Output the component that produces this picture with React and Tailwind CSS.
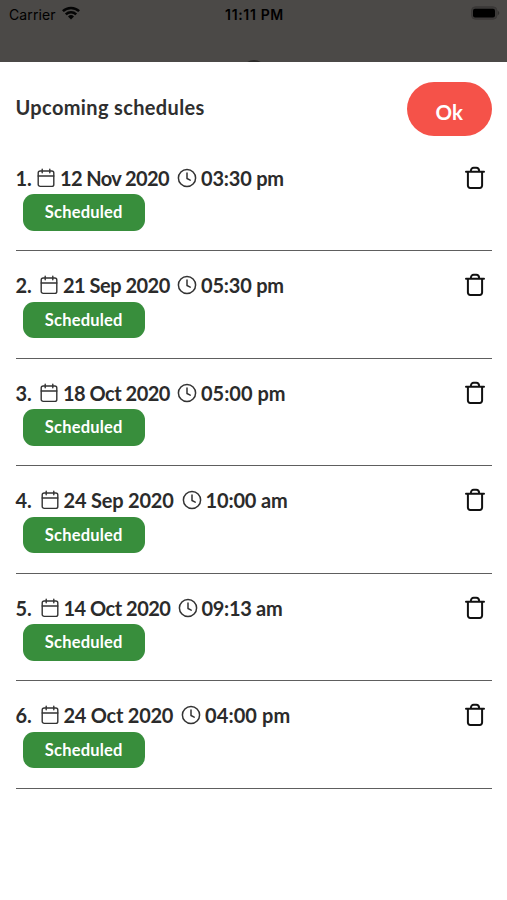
const schedules = [
  { id: 1, date: "12 Nov 2020", time: "03:30 pm", numberSize: "w-[21.5px]", dateSize: "w-[117px] tracking-[-0.6px]", timeSpacing: "tracking-[-0.2px]" },
  { id: 2, date: "21 Sep 2020", time: "05:30 pm", numberSize: "w-[24.5px]", dateSize: "w-[114px] tracking-[-0.5px]", timeSpacing: "tracking-[-0.2px]" },
  { id: 3, date: "18 Oct 2020", time: "05:00 pm", numberSize: "w-[24.5px]", dateSize: "w-[114px] tracking-[-0.5px]", timeSpacing: "tracking-[0px]" },
  { id: 4, date: "24 Sep 2020", time: "10:00 am", numberSize: "w-[25px]", dateSize: "w-[118px] tracking-[-0.2px]", timeSpacing: "tracking-[-0.15px]" },
  { id: 5, date: "14 Oct 2020", time: "09:13 am", numberSize: "w-[25px]", dateSize: "w-[114px] tracking-[-0.5px]", timeSpacing: "tracking-[-0.3px]" },
  { id: 6, date: "24 Oct 2020", time: "04:00 pm", numberSize: "w-[25px]", dateSize: "w-[117.5px] tracking-[-0.25px]", timeSpacing: "tracking-[0.1px]" },
];

function CalendarIcon() {
  return (
    <svg className="h-5 w-[18px] shrink-0" viewBox="0 0 18 20" fill="none" stroke="#333" strokeWidth="1.4" strokeLinecap="round">
      <rect x="1.2" y="3" width="15.6" height="15.4" rx="2" />
      <path d="M1.2 8h15.6M5.2 1.3v3.4M12.8 1.3v3.4" />
    </svg>
  );
}

function ClockIcon() {
  return (
    <svg className="h-5 w-5 shrink-0" viewBox="0 0 20 20" fill="none" stroke="#333" strokeWidth="1.5" strokeLinecap="round" strokeLinejoin="round">
      <circle cx="10" cy="10" r="8.6" />
      <path d="M10 5v5.5l3.2 1.6" />
    </svg>
  );
}

function TrashIcon() {
  return (
    <svg className="h-6 w-[22px]" viewBox="0 0 22 24" fill="none" stroke="#111" strokeWidth="2" strokeLinecap="round" strokeLinejoin="round">
      <path d="M2 5.8h18M3.9 5.8v13.8a2.3 2.3 0 0 0 2.3 2.3h9.6a2.3 2.3 0 0 0 2.3-2.3V5.8M6.8 5.8c0-2.8 1-4 3-4h2.4c2 0 3 1.2 3 4" />
    </svg>
  );
}

function StatusBar() {
  return (
    <header className="relative h-[62px] overflow-hidden bg-[#4b4947] font-['Inter',sans-serif] text-black">
      <div className="grid h-7 grid-cols-3 items-center pr-[7px] pl-[9px] text-[14px]">
        <div className="flex items-center gap-[6px]">
          <span className="tracking-[0.1px]">Carrier</span>
          <svg className="mb-[2px] h-[14px] w-[18px]" viewBox="0 0 18 14" fill="none" stroke="#050505" strokeWidth="2.5">
            <path d="M.9 5.2a11.6 11.6 0 0 1 16.2 0M3.8 8.4a7.5 7.5 0 0 1 10.4 0" />
            <path d="M9 13.5l-3-3a4.3 4.3 0 0 1 6 0z" fill="#050505" stroke="none" />
          </svg>
        </div>
        <span className="text-center text-[14px] font-semibold tracking-[0.65px] whitespace-nowrap">11:11 PM</span>
        <svg className="mb-[2px] h-[14px] w-[29px] justify-self-end" viewBox="0 0 29 14">
          <rect x=".5" y=".8" width="25.5" height="12.4" rx="4" fill="#3d3b3a" stroke="#3a3837" />
          <rect x="2" y="2.7" width="22" height="8.8" rx="2" fill="#000" />
          <path d="M26.8 4.8c2 .8 2 3.6 0 4.4z" fill="#302f2e" />
        </svg>
      </div>
      {/* Top edge of the control hidden behind the sheet */}
      <div className="absolute top-[60px] left-[242px] h-6 w-6 rounded-full bg-[#2b2a29]" />
    </header>
  );
}

function ScheduleRow({ schedule }) {
  return (
    <li className="flex h-[107.5px] items-start justify-between border-b border-[#5e5e5e] pt-[22px]">
      <div>
        <div className="flex h-6 items-center text-[20px] font-bold whitespace-nowrap text-[#2b2b2b]">
          <span className={schedule.numberSize}>{schedule.id}.</span>
          <CalendarIcon />
          <span className={`ml-[5px] ${schedule.dateSize}`}>{schedule.date}</span>
          <ClockIcon />
          <span className={`ml-[4px] ${schedule.timeSpacing}`}>{schedule.time}</span>
        </div>
        <div className="mt-[4.5px] ml-[7px] flex h-[36.5px] w-[122.5px] items-center justify-center rounded-[11px] bg-[#388e3c] pt-px text-[16.5px] font-bold tracking-[0.2px] text-white">
          Scheduled
        </div>
      </div>
      <button className="mr-[6px]" aria-label="Delete schedule">
        <TrashIcon />
      </button>
    </li>
  );
}

export default function App() {
  return (
    <div className="flex h-[900px] w-[507px] flex-col overflow-hidden bg-white font-['Lato',sans-serif]">
      <StatusBar />
      <main className="pt-[20px] pr-[15px] pl-[15.5px]">
        <div className="flex h-[54px] items-start justify-between">
          <h1 className="mt-[10px] text-[20px] font-bold tracking-[0.35px] whitespace-nowrap text-[#2f2f2f]">
            Upcoming schedules
          </h1>
          <button className="h-[54px] w-[85.5px] rounded-[27px] bg-[#f55249] pt-[6px] text-[20.5px] font-bold text-white">
            Ok
          </button>
        </div>
        <ul className="mt-[7.5px]">
          {schedules.map((schedule) => (
            <ScheduleRow key={schedule.id} schedule={schedule} />
          ))}
        </ul>
      </main>
    </div>
  );
}
